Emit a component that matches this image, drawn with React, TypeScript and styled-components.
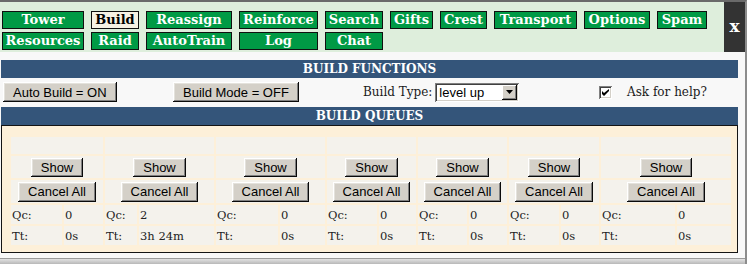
import React from 'react';
import styled, { createGlobalStyle } from 'styled-components';

const GlobalStyle = createGlobalStyle`
  html, body {
    margin: 0;
    padding: 0;
    background: #f8f8f8;
  }
  body {
    font-family: "DejaVu Serif", Georgia, serif;
    color: #1a1a1a;
  }
`;

const Frame = styled.div`
  width: 745px;
  height: 262px;
  border-top: 2px solid #6a6a6a;
  border-right: 2px solid #8c8c8c;
  background: #f8f8f8;
  display: flex;
  flex-direction: column;
  overflow: hidden;
`;

const Nav = styled.div`
  display: flex;
  height: 50px;
  background: #deeedc;
`;

const TabGrid = styled.div`
  display: grid;
  grid-template-columns: 82px 48px 86px 79px 58px 43px 47px 83px 66px 50px;
  grid-auto-rows: 18px;
  column-gap: 7px;
  row-gap: 3px;
  padding: 9px 0 0 2px;
`;

const Tab = styled.div<{ $active?: boolean }>`
  box-sizing: border-box;
  border: 1px solid #101010;
  background: ${(p) => (p.$active ? '#f6f2e4' : '#009a45')};
  color: ${(p) => (p.$active ? '#000' : '#fff')};
  font-weight: bold;
  font-size: 13px;
  line-height: 16px;
  text-align: center;
  white-space: nowrap;
`;

const Close = styled.div`
  margin-left: auto;
  width: 21px;
  background: #333;
  color: #fff;
  font-weight: bold;
  font-size: 17px;
  display: flex;
  align-items: center;
  justify-content: center;
  padding-bottom: 2px;
  box-sizing: border-box;
`;

const Content = styled.div`
  width: 737px;
  padding: 8px 0 0 1px;
`;

const SectionHeader = styled.div`
  height: 18px;
  background: #34557a;
  color: #fff;
  font-weight: bold;
  font-size: 12px;
  line-height: 18px;
  text-align: center;
`;

const FunctionsRow = styled.div`
  display: grid;
  grid-template-columns: 172px 185px 175px 79px 1fr;
  align-items: center;
  height: 20px;
  margin: 4px 0 5px;
  font-size: 12px;
`;

const Cell = styled.div<{ $justify?: string; $pad?: number }>`
  display: flex;
  align-items: center;
  justify-content: ${(p) => p.$justify || 'flex-start'};
  padding-left: ${(p) => p.$pad || 0}px;
  gap: 3px;
  white-space: nowrap;
`;

const Button = styled.button<{ $h?: number }>`
  font-family: "Liberation Sans", Arial, sans-serif;
  font-size: 13px;
  color: #000;
  height: ${(p) => p.$h || 20}px;
  padding: 0 10px;
  background: #d4d0c8;
  border: none;
  box-shadow: inset -1px -1px #0a0a0a, inset 1px 1px #ffffff, inset -2px -2px #808080,
    inset 2px 2px #e4e2dc;
  cursor: default;
`;

const Select = styled.div`
  box-sizing: border-box;
  width: 84px;
  height: 19px;
  background: #fff;
  display: flex;
  align-items: center;
  box-shadow: inset 1px 1px #808080, inset -1px -1px #fff, inset 2px 2px #404040,
    inset -2px -2px #d4d0c8;
  padding: 2px;
`;

const SelectText = styled.span`
  flex: 1;
  font-family: "Liberation Sans", Arial, sans-serif;
  font-size: 13px;
  padding-left: 2px;
  color: #000;
`;

const SelectArrow = styled.span`
  width: 15px;
  height: 15px;
  background: #d4d0c8;
  box-shadow: inset -1px -1px #0a0a0a, inset 1px 1px #ffffff, inset -2px -2px #808080;
  display: flex;
  align-items: center;
  justify-content: center;
`;

const Check = styled.span`
  box-sizing: border-box;
  width: 13px;
  height: 13px;
  background: #fff;
  box-shadow: inset 1px 1px #808080, inset -1px -1px #fff, inset 2px 2px #404040,
    inset -2px -2px #d4d0c8;
  display: flex;
  align-items: center;
  justify-content: center;
`;

const QueueBox = styled.div`
  box-sizing: border-box;
  height: 128px;
  border: 1px solid #141414;
  background: #fdf0d9;
  padding: 11px 0 0 9px;
  display: flex;
  gap: 2px;
`;

const QueueColumn = styled.div<{ $width: number; $label: number }>`
  width: ${(p) => p.$width}px;
  display: grid;
  grid-template-columns: ${(p) => p.$label}px 1fr;
  grid-template-rows: 17px 22px 23px 19px 19px;
  gap: 2px;
`;

const QCell = styled.div<{ $span?: boolean }>`
  grid-column: ${(p) => (p.$span ? '1 / 3' : 'auto')};
  background: #f4f2ec;
  display: flex;
  align-items: center;
  justify-content: ${(p) => (p.$span ? 'center' : 'flex-start')};
  padding-left: ${(p) => (p.$span ? 0 : 1)}px;
  font-size: 11.5px;
  color: #222;
  white-space: nowrap;
`;

const Footer = styled.div`
  margin-top: auto;
  height: 5px;
  border-top: 1px solid #9a9a9a;
  background: linear-gradient(#e2e2e2, #b8b8b8);
`;

const row1 = ['Tower', 'Build', 'Reassign', 'Reinforce', 'Search', 'Gifts', 'Crest', 'Transport', 'Options', 'Spam'];
const row2 = ['Resources', 'Raid', 'AutoTrain', 'Log', 'Chat'];

const queues = [
  { width: 92, label: 51, qc: '0', tt: '0s' },
  { width: 109, label: 32, qc: '2', tt: '3h 24m' },
  { width: 109, label: 62, qc: '0', tt: '0s' },
  { width: 89, label: 50, qc: '0', tt: '0s' },
  { width: 89, label: 49, qc: '0', tt: '0s' },
  { width: 90, label: 50, qc: '0', tt: '0s' },
  { width: 130, label: 74, qc: '0', tt: '0s' },
];

export default function App() {
  return (
    <>
      <GlobalStyle />
      <Frame>
        <Nav>
          <TabGrid>
            {row1.map((t) => (
              <Tab key={t} $active={t === 'Build'}>
                {t}
              </Tab>
            ))}
            {row2.map((t) => (
              <Tab key={t}>{t}</Tab>
            ))}
          </TabGrid>
          <Close>x</Close>
        </Nav>
        <Content>
          <SectionHeader>BUILD FUNCTIONS</SectionHeader>
          <FunctionsRow>
            <Cell $pad={2}>
              <Button>Auto Build = ON</Button>
            </Cell>
            <Cell>
              <Button>Build Mode = OFF</Button>
            </Cell>
            <Cell $pad={5}>
              Build Type:
              <Select>
                <SelectText>level up</SelectText>
                <SelectArrow>
                  <svg width="7" height="4" viewBox="0 0 7 4">
                    <path d="M0 0h7L3.5 4z" fill="#000" />
                  </svg>
                </SelectArrow>
              </Select>
            </Cell>
            <Cell $justify="flex-end">
              <Check>
                <svg width="7" height="7" viewBox="0 0 7 7">
                  <path d="M0 2v3l2 2 5-5V0L2 4z" fill="#000" />
                </svg>
              </Check>
            </Cell>
            <Cell $pad={15}>Ask for help?</Cell>
          </FunctionsRow>
          <SectionHeader>BUILD QUEUES</SectionHeader>
          <QueueBox>
            {queues.map((q, i) => (
              <QueueColumn key={i} $width={q.width} $label={q.label}>
                <QCell $span />
                <QCell $span>
                  <Button $h={19}>Show</Button>
                </QCell>
                <QCell $span>
                  <Button>Cancel All</Button>
                </QCell>
                <QCell>Qc:</QCell>
                <QCell>{q.qc}</QCell>
                <QCell>Tt:</QCell>
                <QCell>{q.tt}</QCell>
              </QueueColumn>
            ))}
          </QueueBox>
        </Content>
        <Footer />
      </Frame>
    </>
  );
}
